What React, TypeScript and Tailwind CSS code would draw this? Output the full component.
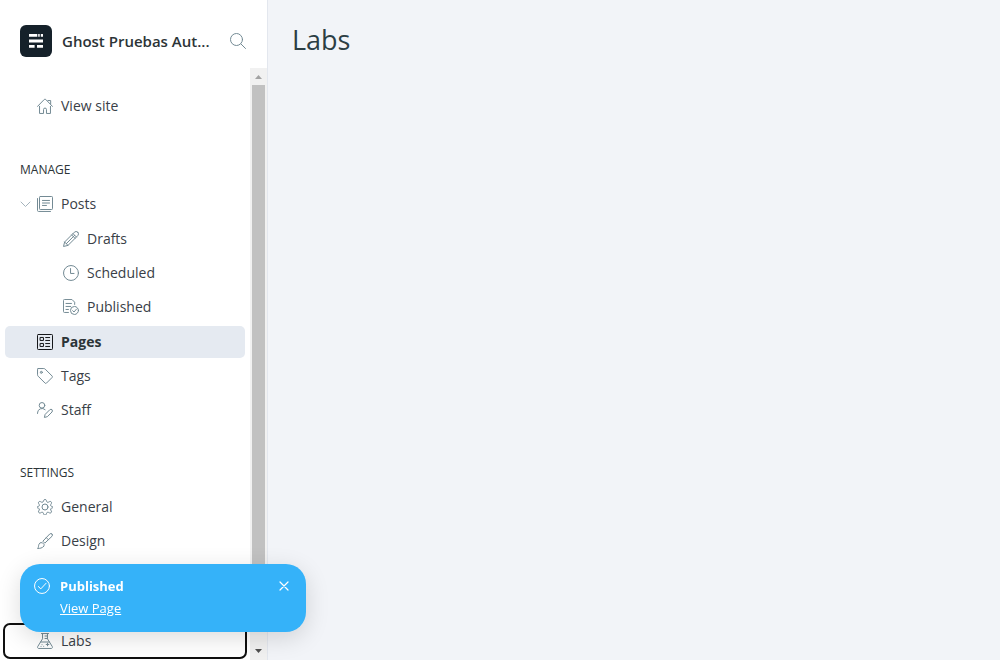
import type { ReactNode } from 'react';

type IconProps = { children: ReactNode; className?: string };

function Icon({ children, className = 'text-[#738a94]' }: IconProps) {
  return (
    <svg
      viewBox="0 0 24 24"
      fill="none"
      stroke="currentColor"
      strokeWidth="1.5"
      strokeLinecap="round"
      strokeLinejoin="round"
      aria-hidden="true"
      className={'size-4 shrink-0 ' + className}
    >
      {children}
    </svg>
  );
}

const HomeIcon = () => (
  <Icon>
    <path d="M3.8 12.5V23.2H9.8V17.3a2.2 2.2 0 0 1 4.4 0V23.2H20.2V12.5" />
    <path d="M.8 12.6 10.9 2.2a1.5 1.5 0 0 1 2.2 0L23.2 12.6M16.5 3.8h4v5" />
  </Icon>
);

const PostsIcon = () => (
  <Icon>
    <rect x="3.75" y=".75" width="19.5" height="19.5" rx="1.2" />
    <path d="M.75 3.8v17.9a1.5 1.5 0 0 0 1.5 1.5h18M8.2 6.7h10.6M8.2 10.5h10.6M8.2 14.2h6" />
  </Icon>
);

const PencilIcon = () => (
  <Icon>
    <path d="M22.2 1.8a3.6 3.6 0 0 0-5.1 0L2.4 16.5.8 23.2l6.7-1.6L22.2 6.9a3.6 3.6 0 0 0 0-5.1ZM15 3.9 20.1 9M2.4 16.5l5.1 5.1M17.5 6.4 5 19M13 5.9l5.1 5.1" />
  </Icon>
);

const ClockIcon = () => (
  <Icon>
    <circle cx="12" cy="12" r="11.2" />
    <path d="M11.3 5.3v7.4h5.2" />
  </Icon>
);

const PublishedIcon = () => (
  <Icon>
    <path d="M8.2 20.2h-6a1.5 1.5 0 0 1-1.5-1.5V2.2a1.5 1.5 0 0 1 1.5-1.5h11.2l4.1 4.1v3.4M4.5 6.7h8.2M4.5 11.2h7M4.5 15.7h3.7" />
    <circle cx="17.2" cy="17.2" r="6" />
    <path d="m14.5 17.5 2 2 3.7-4.3" />
  </Icon>
);

const PagesIcon = () => (
  <Icon className="text-[#15171a]">
    <rect x=".75" y=".75" width="22.5" height="22.5" rx="1.2" />
    <path d="M5.2 5.2h4.5v4.5H5.2ZM5.2 14.2h4.5v4.5H5.2ZM13 5.3h6M13 9.7h6M13 14.3h6M13 18.7h6" />
  </Icon>
);

const TagIcon = () => (
  <Icon>
    <path d="M1.8.8h8.4a3 3 0 0 1 2.1.9l10.4 10.4a1.5 1.5 0 0 1 0 2.1l-8.5 8.5a1.5 1.5 0 0 1-2.1 0L1.7 12.3a3 3 0 0 1-.9-2.1V1.8a1 1 0 0 1 1-1Z" />
    <circle cx="6.5" cy="6.5" r="1.5" />
  </Icon>
);

const StaffIcon = () => (
  <Icon>
    <circle cx="7.5" cy="5" r="4.2" />
    <path d="M.8 17.2v-.7a6.8 6.8 0 0 1 11.4-5M22.4 11.6a2.3 2.3 0 0 0-3.2 0l-7 7-1.1 4.6 4.5-1.2 6.9-7a2.4 2.4 0 0 0-.1-3.4Z" />
  </Icon>
);

const GearIcon = () => (
  <Icon>
    <circle cx="12" cy="12" r="4.5" />
    <path d="M10 2.1a2.1 2.1 0 0 1 4 0l.4 1.4a2.1 2.1 0 0 0 3 1.2l1.2-.7a2.1 2.1 0 0 1 2.9 2.9l-.8 1.2a2.1 2.1 0 0 0 1.3 3l1 .3a1 1 0 0 1 0 2l-1 .3a2.1 2.1 0 0 0-1.3 3l.8 1.3a2.1 2.1 0 0 1-2.9 2.8l-1.2-.7a2.1 2.1 0 0 0-3 1.3l-.4 1.3a2.1 2.1 0 0 1-4 0l-.4-1.3a2.1 2.1 0 0 0-3-1.3l-1.2.7A2.1 2.1 0 0 1 2.5 18l.8-1.3a2.1 2.1 0 0 0-1.3-3l-1-.3a1 1 0 0 1 0-2l1-.3a2.1 2.1 0 0 0 1.3-3l-.8-1.2A2.1 2.1 0 0 1 5.4 4l1.2.7a2.1 2.1 0 0 0 3-1.2Z" />
  </Icon>
);

const BrushIcon = () => (
  <Icon>
    <path d="M22.5 1.5a2.4 2.4 0 0 0-3.4 0L8.8 12.3l2.9 2.9L22.5 4.9a2.4 2.4 0 0 0 0-3.4ZM9.9 20.2c-2 2.5-5.6 3-9.1 3 1.8-1.6 1.2-3.4 1.9-5.7a4.3 4.3 0 0 1 5.2-3l2.8 2.8a4.3 4.3 0 0 1-.8 2.9ZM14 7l3.2 3.2" />
  </Icon>
);

const FlaskIcon = () => (
  <Icon>
    <path d="M6.7 .8h10.6M8.3 .8v7.9L1 20.5a1.8 1.8 0 0 0 1.5 2.7h19a1.8 1.8 0 0 0 1.5-2.7L15.7 8.7V.8M5.5 13.5h13M12 4.5h3.5M12 8.2h3.5M15.8 15.2v4M13.8 17.2h4M7.5 17.5h.1M10 20h.1M6 20.2h.1" />
  </Icon>
);

type NavItemProps = { icon: ReactNode; label: string; state?: 'active' | 'focused'; nested?: boolean };

function NavItem({ icon, label, state, nested }: NavItemProps) {
  const look =
    state === 'active'
      ? 'bg-[#e5eaf1] font-bold text-[#2c3437]'
      : state === 'focused'
        ? 'outline-2 outline-[#101010] text-[#394047]'
        : 'text-[#394047]';
  return (
    <a
      href="#"
      className={'flex h-8 items-center gap-2 rounded-[5px] text-sm ' + (nested ? 'pl-[58px] ' : 'pl-8 ') + look}
    >
      {icon}
      <span>{label}</span>
    </a>
  );
}

function SectionTitle({ children }: { children: ReactNode }) {
  return <h2 className="flex h-8 items-center pl-[15px] text-xs text-[#2c3437] uppercase">{children}</h2>;
}

function ScrollTrack() {
  return (
    <div aria-hidden="true" className="flex w-[17px] shrink-0 flex-col items-center bg-[#f1f1f1]">
      <svg viewBox="0 0 17 17" className="size-[17px] shrink-0">
        <path d="M5 11 8.5 7 12 11Z" fill="#a3a3a3" />
      </svg>
      <div className="w-full flex-1 px-0.5">
        <div className="h-[95%] bg-[#c1c1c1]" />
      </div>
      <svg viewBox="0 0 17 17" className="size-[17px] shrink-0">
        <path d="M5 6H12L8.5 10Z" fill="#505050" />
      </svg>
    </div>
  );
}

function Sidebar() {
  return (
    <aside className="flex w-[268px] shrink-0 flex-col border-r border-[#e3e7ee] bg-white">
      <header className="flex h-[68px] shrink-0 items-center gap-2.5 pt-3.5 pr-[21px] pl-5">
        <svg viewBox="0 0 32 32" className="size-8 shrink-0" aria-hidden="true">
          <rect width="32" height="32" rx="6" fill="#15212a" />
          <path
            d="M9 9h8.3v2.8H9ZM18.200 9h1.500v2.800h-1.500ZM20.800 9h2.200v2.800h-2.200ZM9 14.600h14v2.800H9ZM9 20h5.600v2.800H9ZM17 20h6v2.800h-6Z"
            fill="#fff"
          />
        </svg>
        <span className="flex-1 text-[15px] leading-5 font-semibold whitespace-nowrap text-[#2c3437]">
          Ghost Pruebas Aut...
        </span>
        <button type="button" aria-label="Search" className="shrink-0">
          <svg
            viewBox="0 0 16 16"
            fill="none"
            stroke="currentColor"
            strokeLinecap="round"
            className="size-4 text-[#738a94]"
          >
            <circle cx="6.5" cy="6.5" r="6" />
            <path d="m11 11 4.5 4.5" />
          </svg>
        </button>
      </header>
      <div className="flex min-h-0 flex-1">
        <nav className="flex min-w-0 flex-1 flex-col overflow-hidden px-[5px] pt-[22px]">
          <NavItem icon={<HomeIcon />} label="View site" />
          <section className="mt-8 flex flex-col gap-0.5">
            <SectionTitle>Manage</SectionTitle>
            <div className="flex items-center">
              <button type="button" aria-label="Toggle posts" className="ml-[15px] w-[11px]">
                <svg
                  viewBox="0 0 11 11"
                  fill="none"
                  stroke="#a5b4bd"
                  strokeLinecap="round"
                  strokeLinejoin="round"
                  className="size-[11px]"
                >
                  <path d="m1 3 4.5 4.5L10 3" />
                </svg>
              </button>
              <a href="#" className="ml-1.5 flex h-8 flex-1 items-center gap-2 text-sm text-[#394047]">
                <PostsIcon />
                <span>Posts</span>
              </a>
            </div>
            <div className="flex flex-col gap-0.5 py-px">
              <NavItem nested icon={<PencilIcon />} label="Drafts" />
              <NavItem nested icon={<ClockIcon />} label="Scheduled" />
              <NavItem nested icon={<PublishedIcon />} label="Published" />
            </div>
            <NavItem icon={<PagesIcon />} label="Pages" state="active" />
            <NavItem icon={<TagIcon />} label="Tags" />
            <NavItem icon={<StaffIcon />} label="Staff" />
          </section>
          <section className="mt-[31px] flex flex-col gap-0.5">
            <SectionTitle>Settings</SectionTitle>
            <NavItem icon={<GearIcon />} label="General" />
            <NavItem icon={<BrushIcon />} label="Design" />
            <div className="h-16" />
            <NavItem icon={<FlaskIcon />} label="Labs" state="focused" />
          </section>
        </nav>
        <ScrollTrack />
      </div>
    </aside>
  );
}

function Toast() {
  return (
    <div
      role="status"
      className="fixed bottom-7 left-5 flex w-[286px] items-start gap-2.5 rounded-[20px] bg-[#35b2f9] px-3.5 pt-[11px] pb-[13px] text-[13px] leading-[22px] text-white shadow-[0_6px_24px_rgba(0,0,0,0.14)]"
    >
      <Icon className="mt-[3px] text-white">
        <circle cx="12" cy="12" r="11.2" />
        <path d="m6.5 12.8 3.7 3.5 8-8.500" />
      </Icon>
      <div className="flex flex-1 flex-col items-start">
        <span className="font-bold">Published</span>
        <a href="#" className="font-medium underline">
          View Page
        </a>
      </div>
      <button type="button" aria-label="Close" className="mt-1.5 mr-[3px] flex">
        <svg viewBox="0 0 10 10" stroke="currentColor" strokeWidth="1.2" strokeLinecap="round" className="size-2.5">
          <path d="m1 1 8 8M9 1 1 9" />
        </svg>
      </button>
    </div>
  );
}

export default function App() {
  return (
    <div className="flex h-screen overflow-hidden bg-[#f2f4f8] font-['Open_Sans','Noto_Sans',sans-serif]">
      <Sidebar />
      <main className="min-w-0 flex-1 px-6 pt-[22px]">
        <h1 className="text-[27px] leading-9 font-medium text-[#2c3e44]">Labs</h1>
      </main>
      <Toast />
    </div>
  );
}
